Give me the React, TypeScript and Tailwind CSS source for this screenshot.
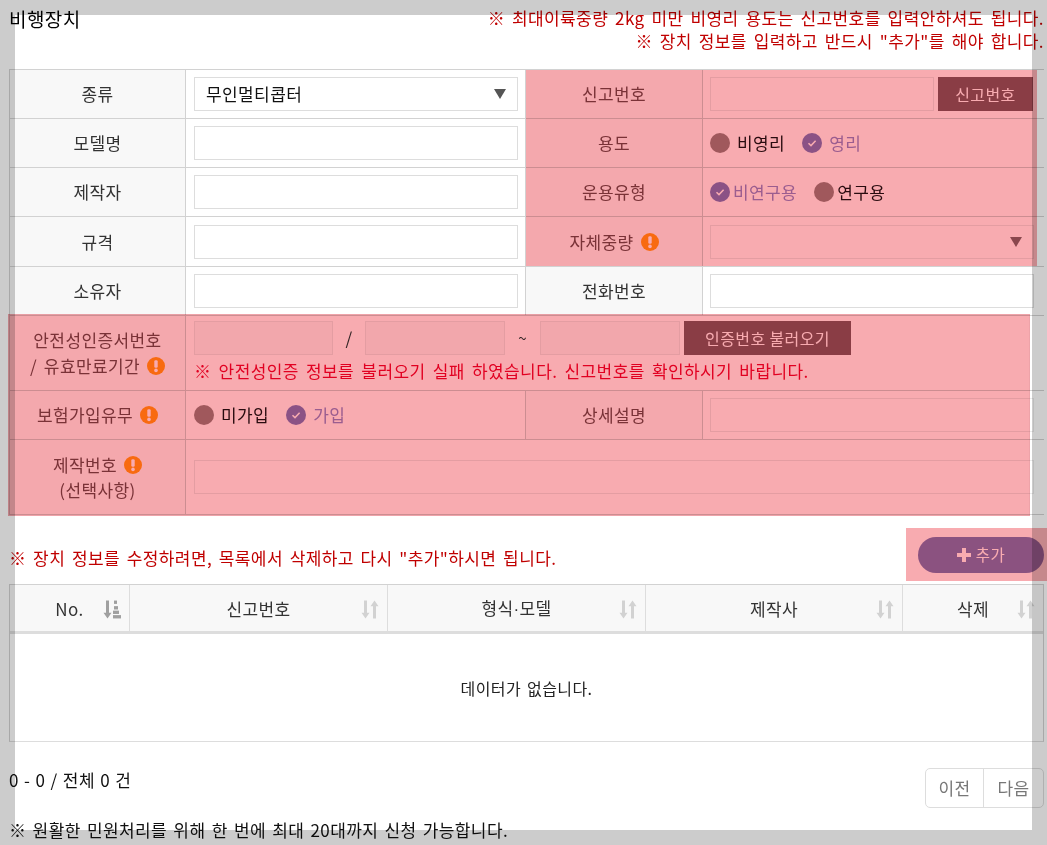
import { ReactNode } from 'react'

const Notice = () => (
  <svg viewBox="0 0 18 18" className="w-[18px] h-[18px] shrink-0 ml-[7px]">
    <circle cx="9" cy="9" r="9" fill="#ff9e16" />
    <rect x="7.300" y="3.200" width="3.400" height="7.600" rx="1.200" fill="#fff" />
    <circle cx="9" cy="13.400" r="1.800" fill="#fff" />
  </svg>
)

const Radio = ({ checked }: { checked?: boolean }) =>
  checked ? (
    <span className="w-5 h-5 rounded-full bg-[#8f7ac1] flex items-center justify-center shrink-0">
      <svg viewBox="0 0 12 12" className="w-3 h-3">
        <path d="M2.500 6.200 5 8.600 9.600 3.800" fill="none" stroke="#fff" strokeWidth="1.500" />
      </svg>
    </span>
  ) : (
    <span className="w-5 h-5 rounded-full bg-[#a58385] shrink-0" />
  )

const Caret = ({ fill = '#555' }: { fill?: string }) => (
  <svg viewBox="0 0 12 10" className="w-3 h-[10px]">
    <path d="M0 0h12L6 10z" fill={fill} />
  </svg>
)

const SortIcon = ({ active }: { active?: boolean }) => (
  <svg viewBox="0 0.500 18 17" preserveAspectRatio="none" className="w-[18px] h-[19px]">
    <g fill={active ? '#a0a0a0' : '#d2d2d2'}>
      <path d="M3 1h3v11h2.500L4.500 17 .5 12H3z" />
      {active ? (
        <>
          <rect x="11" y="1" width="3" height="3" />
          <rect x="11" y="6" width="4" height="3" />
          <rect x="10" y="10" width="6" height="3" />
          <rect x="10" y="14" width="8" height="3" />
        </>
      ) : (
        <path d="M12 17h3V6h2.500L13.500 1 9.500 6H12z" />
      )}
    </g>
  </svg>
)

const Th = ({ children, tinted }: { children: ReactNode; tinted?: boolean }) => (
  <div
    className={`flex items-center justify-center text-center border-r border-[#d2d2d2] ${
      tinted ? 'bg-[#fbfbfb] text-[#7d4a4f]' : 'bg-[#f8f8f8] text-[#333]'
    }`}
  >
    {children}
  </div>
)

const Input = ({ className = 'w-[324px]', tinted }: { className?: string; tinted?: boolean }) => (
  <div className={`h-[34px] border ${tinted ? 'border-[#ebebeb]' : 'border-[#ddd]'} ${className}`} />
)

const Row = ({ children, className = 'h-[49px]' }: { children: ReactNode; className?: string }) => (
  <div className={`grid grid-cols-[176px_340px_177px_1fr] border-b border-[#d2d2d2] ${className}`}>{children}</div>
)

const Td = ({ children, border, right }: { children: ReactNode; border?: boolean; right?: boolean }) => (
  <div className={`flex items-center ${right ? 'pl-[7px]' : 'pl-2'} ${border ? 'border-r border-[#d2d2d2]' : ''}`}>
    {children}
  </div>
)

const columns: { label: ReactNode; width: string; active?: boolean }[] = [
  { label: 'No.', width: 'w-[120px]', active: true },
  { label: '신고번호', width: 'w-[258px]' },
  {
    label: (
      <>
        형식<span className="font-['Liberation_Sans']">·</span>모델
      </>
    ),
    width: 'w-[258px]',
  },
  { label: '제작사', width: 'w-[257px]' },
  { label: '삭제', width: 'flex-1' },
]

export default function App() {
  return (
    <div
      className="relative w-[1047px] h-[845px] overflow-hidden bg-white pl-[9px] pr-[3px] text-[17px] tracking-[0.4px] [word-spacing:2.7px] text-black"
      style={{ fontFamily: '"Noto Sans CJK KR", "Noto Sans", sans-serif' }}
    >
      <div className="h-[69px] flex justify-between">
        <div className="text-[19px] leading-[24px] mt-[7px]">비행장치</div>
        <div className="text-right text-[#c00000] leading-[23px] mt-[6px]">
          <p>※ 최대이륙중량 2kg 미만 비영리 용도는 신고번호를 입력안하셔도 됩니다.</p>
          <p>※ 장치 정보를 입력하고 반드시 "추가"를 해야 합니다.</p>
        </div>
      </div>

      <div className="border-t border-l border-[#d2d2d2]">
        <Row>
          <Th>종류</Th>
          <Td border>
            <div className="w-[324px] h-[34px] border border-[#ddd] flex items-center justify-between pl-[11px] pr-[11px] text-[#111]">
              무인멀티콥터
              <Caret />
            </div>
          </Td>
          <Th tinted>신고번호</Th>
          <Td right>
            <Input tinted className="w-[224px]" />
            <button className="ml-1 w-[95px] h-[34px] bg-[#8e5b64] text-white text-[16px]">신고번호</button>
          </Td>
        </Row>
        <Row>
          <Th>모델명</Th>
          <Td border>
            <Input />
          </Td>
          <Th tinted>용도</Th>
          <Td right>
            <Radio />
            <span className="ml-[7px] text-[#2a1015]">비영리</span>
            <span className="ml-[17px] flex">
              <Radio checked />
            </span>
            <span className="ml-[7px] text-[#9f8ad0]">영리</span>
          </Td>
        </Row>
        <Row>
          <Th>제작자</Th>
          <Td border>
            <Input />
          </Td>
          <Th tinted>운용유형</Th>
          <Td right>
            <Radio checked />
            <span className="ml-[3px] text-[#9f8ad0]">비연구용</span>
            <span className="ml-[17px] flex">
              <Radio />
            </span>
            <span className="ml-[3px] text-[#2a1015]">연구용</span>
          </Td>
        </Row>
        <Row className="h-[50px]">
          <Th>규격</Th>
          <Td border>
            <Input />
          </Td>
          <Th tinted>
            자체중량
            <Notice />
          </Th>
          <Td right>
            <div className="w-[324px] h-[34px] border border-[#ebebeb] flex items-center justify-end pr-[11px]">
              <Caret fill="#8e6a70" />
            </div>
          </Td>
        </Row>
        <Row>
          <Th>소유자</Th>
          <Td border>
            <Input />
          </Td>
          <Th>전화번호</Th>
          <Td right>
            <Input />
          </Td>
        </Row>

        <div className="grid grid-cols-[176px_1fr] h-[75px] border-b border-[#d2d2d2]">
          <Th tinted>
            <div className="leading-[26px]">
              안전성인증서번호
              <div className="flex items-center justify-center">
                / 유효만료기간
                <Notice />
              </div>
            </div>
          </Th>
          <div className="pl-2 pt-[5px]">
            <div className="flex items-center">
              <Input tinted className="w-[139px] bg-[#f9f9f9]" />
              <span className="w-8 text-center text-[#333]">/</span>
              <Input tinted className="w-[140px] bg-[#f9f9f9]" />
              <span className="w-[35px] text-center text-[15px] text-[#333]">~</span>
              <Input tinted className="w-[140px] bg-[#f9f9f9]" />
              <button className="ml-1 w-[167px] h-[34px] bg-[#8e5b64] text-white text-[16px]">인증번호 불러오기</button>
            </div>
            <p className="text-[#e80030] leading-[24px] mt-[4px] [word-spacing:3px]">
              ※ 안전성인증 정보를 불러오기 실패 하였습니다. 신고번호를 확인하시기 바랍니다.
            </p>
          </div>
        </div>

        <Row>
          <Th tinted>
            보험가입유무
            <Notice />
          </Th>
          <Td border>
            <Radio />
            <span className="ml-[7px] text-[#2a1015]">미가입</span>
            <span className="ml-[17px] flex">
              <Radio checked />
            </span>
            <span className="ml-[7px] text-[#9f8ad0]">가입</span>
          </Td>
          <Th tinted>상세설명</Th>
          <Td right>
            <Input tinted />
          </Td>
        </Row>

        <div className="grid grid-cols-[176px_1fr] h-[75px] border-b border-[#d2d2d2]">
          <Th tinted>
            <div className="leading-[25px]">
              <div className="flex items-center justify-center">
                제작번호
                <Notice />
              </div>
              (선택사항)
            </div>
          </Th>
          <Td>
            <Input tinted className="w-[840px]" />
          </Td>
        </div>
      </div>

      <div className="h-[69px] flex items-start justify-between">
        <p className="text-[#c00000] leading-[24px] mt-[31px] [word-spacing:2.5px]">
          ※ 장치 정보를 수정하려면, 목록에서 삭제하고 다시 "추가"하시면 됩니다.
        </p>
        <button className="w-[126px] h-9 rounded-full bg-[#8f7ab9] text-white flex items-center justify-center gap-[5px] mt-[22px] text-[15.5px]">
          <svg viewBox="0 0 14 14" className="w-[14px] h-[14px]">
            <path d="M5 0h4v5h5v4H9v5H5V9H0V5h5z" fill="#fff" />
          </svg>
          추가
        </button>
      </div>

      <div className="border border-[#d2d2d2] border-b-[#ddd]">
        <div className="flex h-[49px] bg-[#f8f8f8] border-b-[3px] border-[#ddd]">
          {columns.map((col, i) => (
            <div
              key={i}
              className={`${col.width} relative flex items-center justify-center pt-[1px] text-[#333] ${i < 4 ? 'border-r border-[#ddd]' : ''}`}
            >
              <span>{col.label}</span>
              <span className="absolute right-[8px] top-[15px]">
                <SortIcon active={col.active} />
              </span>
            </div>
          ))}
        </div>
        <div className="h-[107px] flex items-center justify-center text-[16px] text-[#222] [word-spacing:2px]">
          데이터가 없습니다.
        </div>
      </div>

      <div className="flex items-start justify-between h-[66px]">
        <span className="text-[#111] leading-[24px] mt-[26px] [word-spacing:1px]">0 - 0 / 전체 0 건</span>
        <div className="flex w-[119px] h-10 mt-[26px] border border-[#ddd] rounded-[5px] text-[#777]">
          <span className="w-[58px] border-r border-[#ddd] flex items-center justify-center">이전</span>
          <span className="flex-1 flex items-center justify-center">다음</span>
        </div>
      </div>
      <p className="mt-[10px] leading-[24px] text-[#111] [word-spacing:2px]">
        ※ 원활한 민원처리를 위해 한 번에 최대 20대까지 신청 가능합니다.
      </p>

      {/* guide overlays from the capture */}
      <div className="absolute left-[526px] top-[70px] w-[511px] h-[196px] bg-[#f8abb0] mix-blend-multiply" />
      <div className="absolute left-[8px] top-[314px] w-[1022px] h-[202px] bg-[#f8abb0] border border-[#eea3a9] mix-blend-multiply" />
      <div className="absolute left-[906px] top-[528px] w-[141px] h-[53px] bg-[#f8abb0] mix-blend-multiply" />

      <div className="absolute left-0 top-0 w-full h-[15px] bg-black/20" />
      <div className="absolute left-0 bottom-0 w-full h-[15px] bg-black/20" />
      <div className="absolute left-0 top-[15px] bottom-[15px] w-[15px] bg-black/20" />
      <div className="absolute right-0 top-[15px] bottom-[15px] w-[15px] bg-black/20" />
    </div>
  )
}
